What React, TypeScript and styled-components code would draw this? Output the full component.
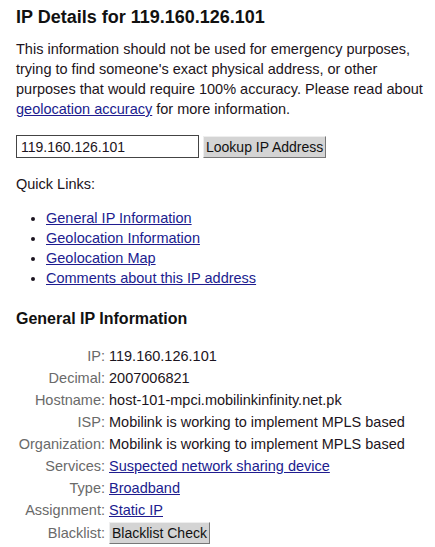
import { FC } from 'react'
import styled, { createGlobalStyle } from 'styled-components'

const GlobalStyle = createGlobalStyle`
  html, body {
    margin: 0;
    padding: 0;
    background: #fff;
  }
  body {
    font-family: Arial, "Liberation Sans", sans-serif;
    color: #1c1420;
  }
`

interface InfoRow {
  label: string
  value: string
  kind?: 'text' | 'link' | 'button'
}

const quickLinks = [
  'General IP Information',
  'Geolocation Information',
  'Geolocation Map',
  'Comments about this IP address'
]

const rows: InfoRow[] = [
  { label: 'IP', value: '119.160.126.101' },
  { label: 'Decimal', value: '2007006821' },
  { label: 'Hostname', value: 'host-101-mpci.mobilinkinfinity.net.pk' },
  { label: 'ISP', value: 'Mobilink is working to implement MPLS based' },
  { label: 'Organization', value: 'Mobilink is working to implement MPLS based' },
  { label: 'Services', value: 'Suspected network sharing device', kind: 'link' },
  { label: 'Type', value: 'Broadband', kind: 'link' },
  { label: 'Assignment', value: 'Static IP', kind: 'link' },
  { label: 'Blacklist', value: 'Blacklist Check', kind: 'button' }
]

const App: FC = () => {
  return (
    <Page>
      <GlobalStyle />
      <Title>IP Details for 119.160.126.101</Title>
      <Intro>
        This information should not be used for emergency purposes,
        <br />
        trying to find someone's exact physical address, or other
        <br />
        purposes that would require 100% accuracy. Please read about
        <br />
        <Link href="#">geolocation accuracy</Link> for more information.
      </Intro>
      <LookupForm onSubmit={(e) => e.preventDefault()}>
        <IpInput defaultValue="119.160.126.101" />
        <GrayButton type="submit">Lookup IP Address</GrayButton>
      </LookupForm>
      <QuickLabel>Quick Links:</QuickLabel>
      <LinkList>
        {quickLinks.map((text) => (
          <li key={text}>
            <Link href="#">{text}</Link>
          </li>
        ))}
      </LinkList>
      <SectionTitle>General IP Information</SectionTitle>
      <InfoTable>
        {rows.map((row) => (
          <InfoRowLine key={row.label}>
            <Label>{row.label}:</Label>
            <Value>
              {row.kind === 'link' && <Link href="#">{row.value}</Link>}
              {row.kind === 'button' && <GrayButton type="button">{row.value}</GrayButton>}
              {!row.kind && row.value}
            </Value>
          </InfoRowLine>
        ))}
      </InfoTable>
    </Page>
  )
}

const Page = styled.div`
  padding: 0 0 0 16px;
  font-size: 14.5px;
`

const Title = styled.h1`
  font-size: 18px;
  font-weight: bold;
  color: #111;
  margin: 0;
  padding-top: 6px;
  line-height: 22px;
`

const Intro = styled.p`
  margin: 11px 0 0;
  line-height: 20px;
  white-space: nowrap;
`

const Link = styled.a`
  color: #201c8f;
  text-decoration: underline;
`

const LookupForm = styled.form`
  display: flex;
  align-items: center;
  gap: 4px;
  margin-top: 16px;
`

const IpInput = styled.input`
  box-sizing: border-box;
  width: 183px;
  height: 23px;
  border: 1px solid #444;
  padding: 1px 4px;
  font-family: Arial, "Liberation Sans", sans-serif;
  font-size: 14px;
  color: #1c1420;
  background: #fff;
`

const GrayButton = styled.button`
  box-sizing: border-box;
  height: 22px;
  padding: 0 2px;
  background: #d4d4d4;
  border: 1px solid;
  border-color: #eee #777 #777 #eee;
  font-family: Arial, "Liberation Sans", sans-serif;
  font-size: 14px;
  color: #111;
  cursor: pointer;
`

const QuickLabel = styled.p`
  margin: 16px 0 0;
  line-height: 20px;
`

const LinkList = styled.ul`
  margin: 14px 0 0;
  padding-left: 30px;
  line-height: 20px;
  list-style: disc;
`

const SectionTitle = styled.h3`
  margin: 21px 0 0;
  font-size: 16px;
  font-weight: bold;
  line-height: 20px;
  color: #111;
`

const InfoTable = styled.div`
  display: grid;
  row-gap: 2px;
  margin-top: 17px;
`

const InfoRowLine = styled.div`
  display: grid;
  grid-template-columns: 89px 1fr;
  column-gap: 4px;
  align-items: center;
  min-height: 20px;
  line-height: 20px;
`

const Label = styled.span`
  text-align: right;
  color: #6a6a6a;
  white-space: nowrap;
`

const Value = styled.span`
  white-space: nowrap;
`

export default App
